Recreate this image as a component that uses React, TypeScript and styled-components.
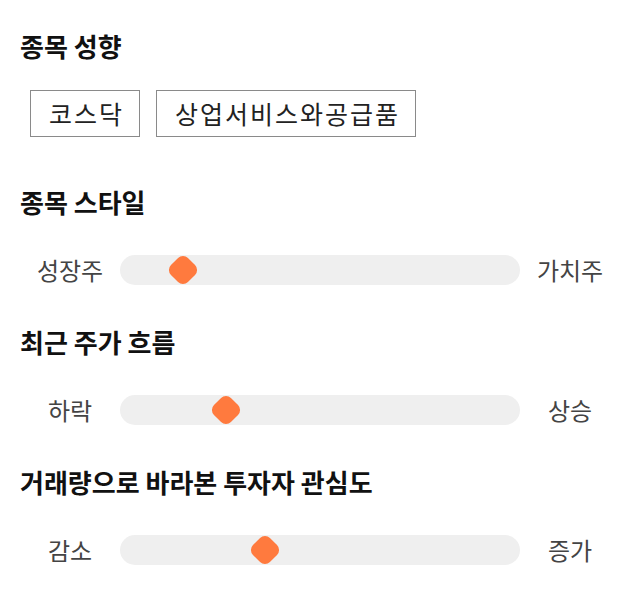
import React from 'react';
import styled, { createGlobalStyle } from 'styled-components';

const GlobalStyle = createGlobalStyle`
  body {
    margin: 0;
    background: #ffffff;
    font-family: 'Noto Sans CJK KR', 'Noto Sans', sans-serif;
  }
`;

const Page = styled.div`
  display: flex;
  flex-direction: column;
  gap: 41px;
  padding: 30px 20px 20px;
  width: 640px;
  box-sizing: border-box;
`;

const Section = styled.section`
  display: flex;
  flex-direction: column;
`;

const Heading = styled.h2`
  margin: 0;
  font-size: 26px;
  line-height: 32px;
  font-weight: 700;
  color: #111111;
`;

const ChipRow = styled.div`
  display: flex;
  gap: 16px;
  margin: 28px 0 8px 10px;
`;

const Chip = styled.div`
  padding: 6px 15px 6px 18px;
  border: 1px solid #8a8a8a;
  font-size: 25px;
  line-height: 33px;
  letter-spacing: 2px;
  color: #222222;
`;

const SliderRow = styled.div`
  display: flex;
  align-items: center;
  margin-top: 37px;
  height: 30px;
`;

const EndLabel = styled.span`
  width: 100px;
  text-align: center;
  font-size: 24px;
  line-height: 30px;
  color: #444444;
`;

const Track = styled.div`
  position: relative;
  flex: 1;
  height: 30px;
  border-radius: 15px;
  background: #efefef;
`;

const Thumb = styled.div`
  position: absolute;
  top: 50%;
  width: 24px;
  height: 24px;
  border-radius: 7px;
  background: #ff7a3e;
  transform: translate(-50%, -50%) rotate(45deg);
`;

type Scale = {
  title: string;
  low: string;
  high: string;
  value: number;
};

const scales: Scale[] = [
  { title: '종목 스타일', low: '성장주', high: '가치주', value: 15.75 },
  { title: '최근 주가 흐름', low: '하락', high: '상승', value: 26.5 },
  { title: '거래량으로 바라본 투자자 관심도', low: '감소', high: '증가', value: 36.25 },
];

const tags = ['코스닥', '상업서비스와공급품'];

export default function App() {
  return (
    <>
      <GlobalStyle />
      <Page>
        <Section>
          <Heading>종목 성향</Heading>
          <ChipRow>
            {tags.map((tag) => (
              <Chip key={tag}>{tag}</Chip>
            ))}
          </ChipRow>
        </Section>
        {scales.map((scale) => (
          <Section key={scale.title}>
            <Heading>{scale.title}</Heading>
            <SliderRow>
              <EndLabel>{scale.low}</EndLabel>
              <Track>
                <Thumb style={{ left: `${scale.value}%` }} />
              </Track>
              <EndLabel>{scale.high}</EndLabel>
            </SliderRow>
          </Section>
        ))}
      </Page>
    </>
  );
}
